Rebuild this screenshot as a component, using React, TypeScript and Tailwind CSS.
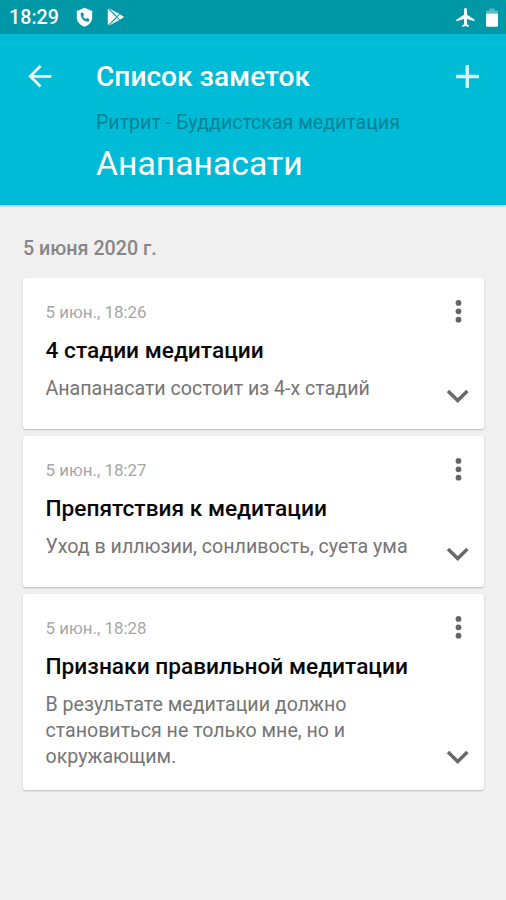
type Note = { time: string; title: string; lines: string[] };

const notes: Note[] = [
  { time: '5 июн., 18:26', title: '4 стадии медитации', lines: ['Анапанасати состоит из 4-х стадий'] },
  { time: '5 июн., 18:27', title: 'Препятствия к медитации', lines: ['Уход в иллюзии, сонливость, суета ума'] },
  {
    time: '5 июн., 18:28',
    title: 'Признаки правильной медитации',
    lines: ['В результате медитации должно', 'становиться не только мне, но и', 'окружающим.'],
  },
];

function StatusBar() {
  return (
    <div className="flex h-[34px] items-center bg-[#0097a7] pl-[9px] pr-[7px] text-white">
      <span className="w-[67px] pt-px text-[19.700px] font-medium leading-[33px]">18:29</span>
      <svg className="h-[20px] w-[17px]" viewBox="0 0 17 20">
        <path fill="#fff" d="M8.500.8 16.200 4v6.800c0 4-3.200 7.200-7.700 9C4 18 .8 14.800.8 10.800V4z" />
        <path fill="#0097a7" d="M5.300 5.800 7 5.600l1 2.500-1 1.200c.7 1.300 1.600 2.100 2.900 2.800l1.200-1 2.100.9-.1 1.800c-.3.700-1.100 1-2 .8-3.600-.7-6.200-3.800-6.400-7.200-.1-.8.100-1.300.6-1.600z" />
      </svg>
      <svg className="ml-[14px] h-[20px] w-[18px]" viewBox="0 0 18 20">
        <path fill="#fff" d="M.8 1.700v16.600L9.200 10z" />
        <path fill="#d5f1f4" d="M1.600 1.300 10 9.200l2.400-2.400zM1.600 18.700 10 10.800l2.400 2.400z" />
        <path fill="#fff" d="m13 7.200 4 2.800-4 2.800-2.600-2.800z" />
      </svg>
      <div className="flex-1" />
      <svg className="mt-px h-[19px] w-[19px]" viewBox="1.500 2 20 20">
        <path fill="#fff" d="M21 16v-2l-8-5V3.500c0-.83-.67-1.500-1.500-1.500S10 2.670 10 3.500V9l-8 5v2l8-2.500V19l-2 1.500V22l3.500-1 3.500 1v-1.500L13 19v-5.500l8 2.500z" />
      </svg>
      <svg className="ml-[11px] h-[20px] w-[12px]" viewBox="0 0 12 20">
        <path fill="#57bac4" d="M3.500 1.500h5v2H12v3H0v-3h3.500z" />
        <rect y="6.500" width="12" height="13.200" rx="1" fill="#fff" />
      </svg>
      <div className="w-px" />
    </div>
  );
}

function Header() {
  return (
    <header className="h-[171px] bg-[#00bbd6] pl-[28px] pr-[27px] pt-[22px] text-white shadow-[0_1px_2px_rgba(0,0,0,0.25)]">
      <div className="flex h-[40px] items-center">
        <svg className="h-[24px] w-[24px]" viewBox="0 0 24 24" fill="none" stroke="#f0fcfd" strokeWidth="2.800">
          <path d="M23.300 12.300H3M12.500 2 2.300 12.300l10.200 10.200" />
        </svg>
        <h1 className="ml-[44px] flex-1 pt-px text-[28.100px] font-medium leading-[40px]">Список заметок</h1>
        <svg className="h-[24px] w-[24px]" viewBox="0 0 24 24" stroke="#d3f3f8" strokeWidth="3.400">
          <path d="M12.300 1v23M1 12.500h23" />
        </svg>
      </div>
      <p className="ml-[68px] mt-[14px] text-[19.600px] leading-[26px] text-[#008396]">Ритрит - Буддистская медитация</p>
      <h2 className="ml-[68px] mt-[7px] text-[33.700px] leading-[42px]">Анапанасати</h2>
    </header>
  );
}

function NoteCard({ note }: { note: Note }) {
  return (
    <article className="flex min-h-[151px] justify-between rounded-[3px] bg-white pb-[20px] pl-[22.500px] pr-[14px] pt-[22px] shadow-[0_1px_2px_rgba(0,0,0,0.22)]">
      <div>
        <div className="text-[16.900px] leading-[24px] text-[#a6a6a6]">{note.time}</div>
        <h3 className="mt-[12px] text-[22.700px] font-medium leading-[30px] text-[#080808]">{note.title}</h3>
        <div className="mt-[10px] text-[19.600px] leading-[26px] text-[#757575]">
          {note.lines.map((line) => (
            <p key={line} className="whitespace-nowrap">{line}</p>
          ))}
        </div>
      </div>
      <div className="mb-[5px] flex w-[24px] flex-col items-center justify-between">
        <svg className="h-[24px] w-[8px]" viewBox="0 0 8 24" fill="#656565">
          <circle cx="4.500" cy="2.900" r="2.900" />
          <circle cx="4.500" cy="11.300" r="2.900" />
          <circle cx="4.500" cy="19.700" r="2.900" />
        </svg>
        <svg className="h-[16px] w-[24px]" viewBox="0 0 24 16" fill="none" stroke="#696969" strokeWidth="3.400">
          <path d="m2 3 9.700 9.500L21.400 3" />
        </svg>
      </div>
    </article>
  );
}

export default function App() {
  return (
    <div className="h-[900px] w-[506px] overflow-hidden bg-[#f0f0f0] font-['Roboto','Noto_Sans',sans-serif]">
      <StatusBar />
      <Header />
      <main className="pl-[23px] pr-[22px]">
        <div className="pt-[30px] text-[19.700px] font-medium leading-[28px] text-[#868686]">5 июня 2020 г.</div>
        <div className="mt-[15px] flex flex-col gap-[7px]">
          {notes.map((note) => (
            <NoteCard key={note.time} note={note} />
          ))}
        </div>
      </main>
    </div>
  );
}
